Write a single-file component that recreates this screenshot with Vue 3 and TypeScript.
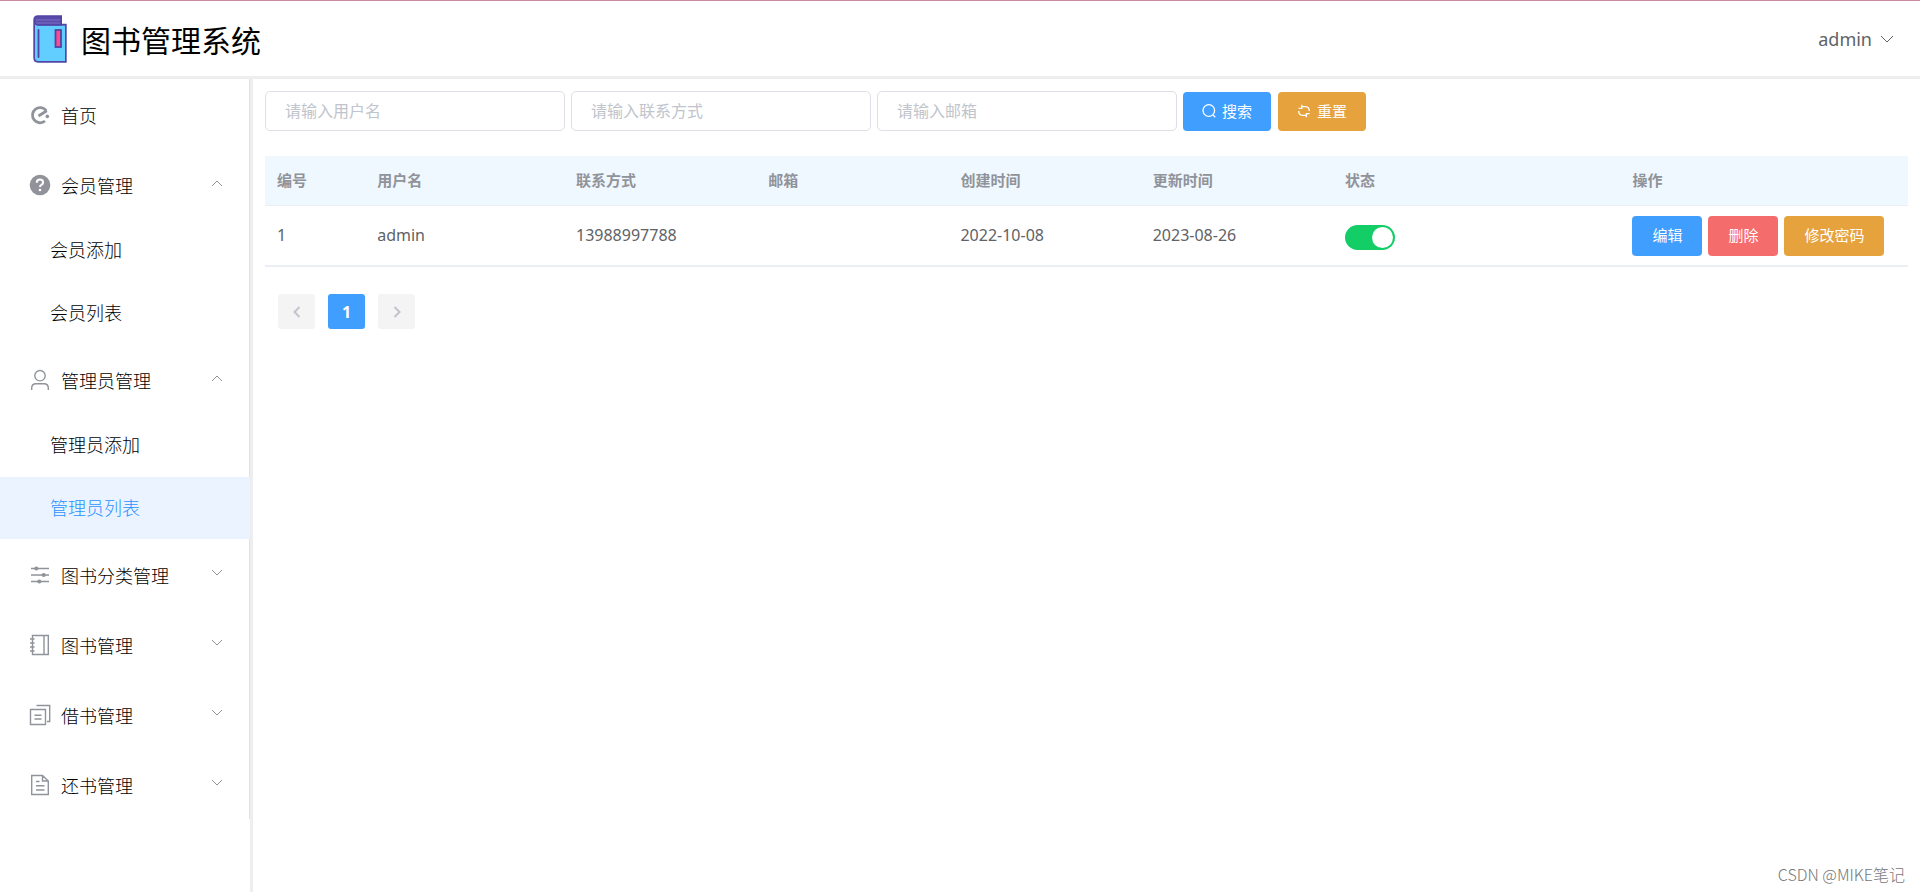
<script setup lang="ts">
import { reactive, ref } from 'vue'

interface MenuItem {
  title: string
  icon: string
  open?: boolean
  children?: string[]
}

interface Member {
  id: number
  name: string
  phone: string
  email: string
  created: string
  updated: string
  enabled: boolean
}

const menus = reactive<MenuItem[]>([
  { title: '首页', icon: 'home' },
  { title: '会员管理', icon: 'question', open: true, children: ['会员添加', '会员列表'] },
  { title: '管理员管理', icon: 'user', open: true, children: ['管理员添加', '管理员列表'] },
  { title: '图书分类管理', icon: 'operation', open: false, children: [] },
  { title: '图书管理', icon: 'notebook', open: false, children: [] },
  { title: '借书管理', icon: 'copy', open: false, children: [] },
  { title: '还书管理', icon: 'document', open: false, children: [] },
])

const active = ref('管理员列表')

const query = reactive({ name: '', phone: '', email: '' })

const rows = reactive<Member[]>([
  { id: 1, name: 'admin', phone: '13988997788', email: '', created: '2022-10-08', updated: '2023-08-26', enabled: true },
])

function reset() {
  query.name = ''
  query.phone = ''
  query.email = ''
}

function toggle(item: MenuItem) {
  item.open = !item.open
}
</script>

<template>
  <div class="page">
    <header class="topbar">
      <div class="brand">
        <svg class="logo" viewBox="0 0 34 48" aria-hidden="true">
          <path d="M5 1H28.5V10H33V47H5Q1 47 1 42V5Q1 1 5 1Z" fill="#5a4bab" />
          <path d="M5 10.5H32V46H5Q2 46 2 42.5V9.500Q3 10.500 5 10.500Z" fill="#62cdff" />
          <path d="M3 5H27M3 8H27" stroke="#7d70c4" stroke-width="1" />
          <path d="M5 1H28.300V9.500H33V47H5Q1 47 1 42.500V5Q1 1 5 1ZM2 8Q3 10 5 10H29" fill="none" stroke="#5045a5" stroke-width="1.400" />
          <path d="M5.500 15V42" stroke="#5045a5" stroke-width="1.800" stroke-linecap="round" />
          <rect x="22.500" y="15" width="5.500" height="17" fill="#ff4a90" stroke="#5045a5" stroke-width="1.800" />
        </svg>
        <h1 class="title">图书管理系统</h1>
      </div>
      <button class="account" type="button">
        admin
        <svg class="account-arrow" viewBox="0 0 14 8" aria-hidden="true"><path d="M1 1L7 7L13 1" /></svg>
      </button>
    </header>

    <div class="body">
      <aside class="sidebar">
        <nav class="menu">
          <div v-for="item in menus" :key="item.title">
            <component
              :is="item.children ? 'button' : 'a'"
              class="menu-item"
              :href="item.children ? undefined : '#'"
              :type="item.children ? 'button' : undefined"
              :aria-expanded="item.children ? item.open : undefined"
              @click="item.children && toggle(item)"
            >
              <span class="menu-icon">
                <svg viewBox="0 0 22 22" aria-hidden="true">
                  <g v-if="item.icon === 'home'" stroke-width="2.800">
                    <path d="M17.300 6.800A7.600 7.600 0 1 0 16 17" />
                    <path d="M9.500 12L17.800 6.800" />
                    <circle class="solid" cx="18.300" cy="12.400" r="1.800" />
                  </g>
                  <g v-else-if="item.icon === 'question'">
                    <circle class="solid" cx="11" cy="11" r="10.300" />
                    <path class="mark" d="M7.800 8.800Q7.800 5.600 11 5.600Q14.100 5.600 14.100 8.400Q14.100 9.900 12.300 10.900Q11 11.600 11 13" />
                    <circle class="mark-dot" cx="11" cy="16" r="1.300" />
                  </g>
                  <g v-else-if="item.icon === 'user'">
                    <circle cx="11" cy="6.700" r="5.200" />
                    <path d="M2.700 21V19Q2.700 14.800 7 14.800H15Q19.300 14.800 19.300 19V21" />
                  </g>
                  <g v-else-if="item.icon === 'operation'">
                    <path d="M2 4.500H20M2 11H20M2 17.500H20" />
                    <circle class="solid" cx="7.300" cy="4.500" r="2.100" />
                    <circle class="solid" cx="14.700" cy="11" r="2.100" />
                    <circle class="solid" cx="10.300" cy="17.500" r="2.100" />
                  </g>
                  <g v-else-if="item.icon === 'notebook'">
                    <path d="M3.500 1.500H19.300V20.500H3.500ZM15 1.500V20.500M1 5H5.500M1 9H5.500M1 13H5.500M1 17H5.500" />
                  </g>
                  <g v-else-if="item.icon === 'copy'">
                    <path d="M1.500 5.500H16.500V20.500H1.500ZM7.500 1.500H20.700V17.500H18M5.500 11.200H12.500M5.500 15H12.500" />
                  </g>
                  <g v-else>
                    <path d="M2.700 1.500H13.500L19.300 7V20.500H2.700ZM13.500 1.500V7H19.300M7 7.500H10.500M7 11.700H15.500M7 16H15.500" />
                  </g>
                </svg>
              </span>
              <span class="menu-text">{{ item.title }}</span>
              <svg v-if="item.children" class="arrow" :class="{ up: item.open }" viewBox="0 0 12 8" aria-hidden="true">
                <path d="M1 1L6 6L11 1" />
              </svg>
            </component>
            <div v-if="item.open && item.children?.length" class="submenu">
              <a
                v-for="child in item.children"
                :key="child"
                href="#"
                class="sub-item"
                :class="{ active: child === active }"
                @click.prevent="active = child"
              >{{ child }}</a>
            </div>
          </div>
        </nav>
      </aside>

      <main class="content">
        <form class="search" @submit.prevent>
          <input v-model="query.name" class="field" type="text" placeholder="请输入用户名" aria-label="用户名" />
          <input v-model="query.phone" class="field" type="text" placeholder="请输入联系方式" aria-label="联系方式" />
          <input v-model="query.email" class="field" type="text" placeholder="请输入邮箱" aria-label="邮箱" />
          <div class="search-actions">
            <button class="btn primary" type="submit">
              <svg class="btn-icon" viewBox="0 0 14 14" aria-hidden="true">
                <circle cx="6.800" cy="6.500" r="5.800" /><path d="M10.900 10.900L13.300 13.300" />
              </svg>
              搜索
            </button>
            <button class="btn warning" type="button" @click="reset">
              <svg class="btn-icon" viewBox="0 0 14 14" aria-hidden="true">
                <path d="M4 2.600H8.500Q12.300 3 12.300 7M1.700 7Q1.700 11 5.500 11.400H10M4.800 .8V4.400H1.600M9.400 13.200V9.600H12.600" />
              </svg>
              重置
            </button>
          </div>
        </form>

        <table class="table">
          <colgroup>
            <col class="c-id" /><col class="c-name" /><col class="c-mid" /><col class="c-mid" />
            <col class="c-mid" /><col class="c-mid" /><col class="c-wide" /><col />
          </colgroup>
          <thead>
            <tr>
              <th>编号</th><th>用户名</th><th>联系方式</th><th>邮箱</th>
              <th>创建时间</th><th>更新时间</th><th>状态</th><th>操作</th>
            </tr>
          </thead>
          <tbody>
            <tr v-for="row in rows" :key="row.id">
              <td>{{ row.id }}</td>
              <td>{{ row.name }}</td>
              <td>{{ row.phone }}</td>
              <td>{{ row.email }}</td>
              <td>{{ row.created }}</td>
              <td>{{ row.updated }}</td>
              <td><input v-model="row.enabled" class="switch" type="checkbox" role="switch" aria-label="状态" /></td>
              <td>
                <div class="ops">
                  <button class="btn primary" type="button">编辑</button>
                  <button class="btn danger" type="button">删除</button>
                  <button class="btn warning" type="button">修改密码</button>
                </div>
              </td>
            </tr>
          </tbody>
        </table>

        <nav class="pager" aria-label="分页">
          <button type="button" disabled aria-label="上一页">
            <svg viewBox="0 0 8 12" aria-hidden="true"><path d="M6.500 1L1.500 6L6.500 11" /></svg>
          </button>
          <button type="button" class="current" aria-current="page">1</button>
          <button type="button" disabled aria-label="下一页">
            <svg viewBox="0 0 8 12" aria-hidden="true"><path d="M1.500 1L6.500 6L1.500 11" /></svg>
          </button>
        </nav>
      </main>
    </div>

    <div class="watermark">CSDN @MIKE笔记</div>
  </div>
</template>

<style>
body {
  margin: 0;
  background: #fff;
}
</style>

<style scoped>
.page {
  position: relative;
  display: flex;
  flex-direction: column;
  box-sizing: border-box;
  min-height: 100vh;
  border-top: 1px solid #c98ba0;
  font-family: "Noto Sans", "Noto Sans CJK SC", sans-serif;
  font-size: 16px;
  color: #606266;
}

button,
input {
  font-family: inherit;
}

svg {
  fill: none;
  stroke: currentColor;
}

.topbar {
  display: flex;
  align-items: center;
  justify-content: space-between;
  height: 75px;
  padding: 0 26px 0 33px;
  border-bottom: 3px solid #eee;
}

.brand {
  display: flex;
  align-items: center;
  gap: 14px;
}

.logo {
  width: 34px;
  height: 48px;
  stroke: none;
}

.title {
  margin: 0;
  padding-top: 4px;
  font-size: 30px;
  font-weight: 400;
  line-height: 40px;
  color: #000;
}

.account {
  display: flex;
  align-items: center;
  gap: 8px;
  padding: 0;
  border: 0;
  background: none;
  font-size: 18px;
  line-height: 24px;
  color: #606266;
  cursor: pointer;
}

.account-arrow {
  width: 14px;
  height: 8px;
}

.body {
  display: flex;
  flex: 1;
}

.sidebar {
  flex: none;
  width: 250px;
  border-right: 3px solid #eee;
}

.menu {
  border-right: 1px solid #e2e2e2;
}

.menu-item {
  display: flex;
  align-items: center;
  gap: 6px;
  box-sizing: border-box;
  width: 100%;
  height: 70px;
  padding: 2px 26px 0 25px;
  border: 0;
  background: none;
  font-size: 18px;
  font-weight: 300;
  color: #000;
  text-align: left;
  text-decoration: none;
  cursor: pointer;
}

.menu-icon {
  display: flex;
  justify-content: center;
  width: 30px;
  color: #909399;
}

.menu-icon svg {
  width: 22px;
  height: 22px;
  stroke-width: 1.4;
}

.menu-icon .solid {
  fill: #909399;
  stroke: none;
}

.menu-icon .mark {
  stroke: #fff;
  stroke-width: 2;
}

.menu-icon .mark-dot {
  fill: #fff;
  stroke: none;
}

.menu-text {
  flex: 1;
}

.arrow {
  width: 12px;
  height: 8px;
  margin-bottom: 5px;
  color: #909399;
}

.arrow.up {
  transform: rotate(180deg);
}

.submenu {
  display: grid;
  grid-auto-rows: 1fr;
  height: 125px;
  margin-right: -1px;
}

.sub-item {
  display: flex;
  align-items: center;
  padding: 0 0 2px 50px;
  border-right: 1px solid #e2e2e2;
  font-size: 18px;
  font-weight: 300;
  color: #000;
  text-decoration: none;
}

.sub-item.active {
  border-right-color: #eaf3ff;
  background: #eaf3ff;
  color: #2a92ff;
}

.content {
  flex: 1;
  min-width: 0;
  padding: 12px;
}

.search {
  display: flex;
  flex-wrap: wrap;
  align-items: flex-end;
  gap: 6px;
}

.field {
  box-sizing: border-box;
  width: 300px;
  height: 40px;
  padding: 0 19px;
  border: 1px solid #dcdfe6;
  border-radius: 5px;
  background: #fff;
  font-size: 16px;
  color: #606266;
}

.field::placeholder {
  color: #c0c4cc;
  opacity: 1;
}

.search-actions {
  display: flex;
  gap: 7px;
}

.btn {
  display: flex;
  align-items: center;
  justify-content: center;
  gap: 6px;
  box-sizing: border-box;
  height: 40px;
  padding: 0 20px 2px;
  border: 0;
  border-radius: 4px;
  font-size: 15px;
  line-height: 20px;
  color: #fff;
  white-space: nowrap;
  cursor: pointer;
}

.search-actions .btn {
  height: 39px;
  padding: 0 19px 1px;
}

.btn-icon {
  width: 14px;
  height: 14px;
  stroke-width: 1.3;
}

.primary {
  background: #409eff;
}

.warning {
  background: #e6a23c;
}

.danger {
  background: #f56c6c;
}

.table {
  width: 100%;
  margin-top: 25px;
  border-collapse: separate;
  border-spacing: 0;
  table-layout: fixed;
}

.c-id {
  width: 6.1%;
}

.c-name {
  width: 12.1%;
}

.c-mid {
  width: 11.7%;
}

.c-wide {
  width: 17.5%;
}

.table th,
.table td {
  box-sizing: border-box;
  padding: 0 12px;
  text-align: left;
  white-space: nowrap;
}

.table th {
  height: 50px;
  padding-bottom: 2px;
  border-bottom: 1px solid #ebeef5;
  background: #eff7ff;
  font-size: 15px;
  font-weight: 700;
  color: #909399;
}

.table td {
  height: 61px;
  padding-bottom: 1px;
  border-bottom: 2px solid #ebeef5;
}

.switch {
  display: block;
  position: relative;
  appearance: none;
  width: 50px;
  height: 25px;
  margin: 4px 0 0;
  border-radius: 13px;
  background: #c0c4cc;
  cursor: pointer;
}

.switch::before {
  content: "";
  position: absolute;
  top: 2px;
  left: 2px;
  width: 21px;
  height: 21px;
  border-radius: 50%;
  background: #fff;
}

.switch:checked {
  background: #13ce66;
}

.switch:checked::before {
  left: 27px;
}

.ops {
  display: flex;
  gap: 6px;
  padding-top: 1px;
}

.pager {
  display: flex;
  gap: 13px;
  margin-top: 27px;
  padding-left: 13px;
}

.pager button {
  display: flex;
  align-items: center;
  justify-content: center;
  width: 37px;
  height: 35px;
  padding: 0;
  border: 0;
  border-radius: 3px;
  background: #f4f4f5;
  font-size: 16px;
  font-weight: 700;
  color: #c0c4cc;
}

.pager svg {
  width: 8px;
  height: 12px;
  stroke-width: 2;
}

.pager .current {
  background: #409eff;
  color: #fff;
}

.watermark {
  position: absolute;
  right: 15px;
  bottom: 6px;
  font-family: "Noto Sans CJK SC", sans-serif;
  font-size: 16px;
  font-weight: 300;
  line-height: 24px;
  color: #777;
}
</style>
